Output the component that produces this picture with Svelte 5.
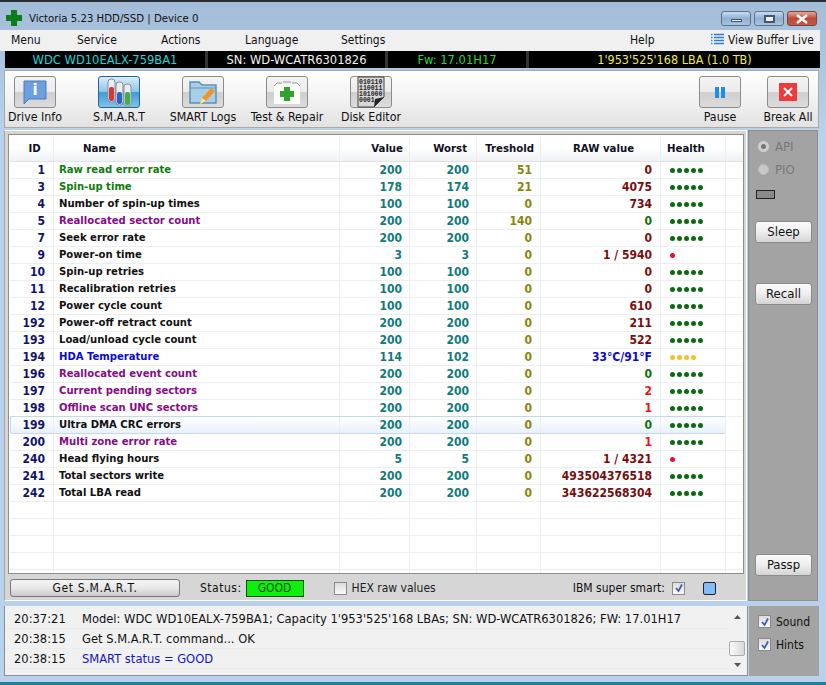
<script>
  const tools = [
    { label: "Drive Info", icon: "info" },
    { label: "S.M.A.R.T", icon: "smart", active: true },
    { label: "SMART Logs", icon: "logs" },
    { label: "Test & Repair", icon: "repair" },
    { label: "Disk Editor", icon: "disk" }
  ];

  // id, name, name colour, value, worst, treshold, raw, raw colour, health
  const rows = [
    [1, "Raw read error rate", "ok", 200, 200, 51, "0", "dark", 5],
    [3, "Spin-up time", "ok", 178, 174, 21, "4075", "dark", 5],
    [4, "Number of spin-up times", "", 100, 100, 0, "734", "dark", 5],
    [5, "Reallocated sector count", "crit", 200, 200, 140, "0", "fine", 5],
    [7, "Seek error rate", "", 200, 200, 0, "0", "dark", 5],
    [9, "Power-on time", "", 3, 3, 0, "1 / 5940", "dark", 1],
    [10, "Spin-up retries", "", 100, 100, 0, "0", "dark", 5],
    [11, "Recalibration retries", "", 100, 100, 0, "0", "dark", 5],
    [12, "Power cycle count", "", 100, 100, 0, "610", "dark", 5],
    [192, "Power-off retract count", "", 200, 200, 0, "211", "dark", 5],
    [193, "Load/unload cycle count", "", 200, 200, 0, "522", "dark", 5],
    [194, "HDA Temperature", "temp", 114, 102, 0, "33°C/91°F", "temp", 4],
    [196, "Reallocated event count", "crit", 200, 200, 0, "0", "fine", 5],
    [197, "Current pending sectors", "crit", 200, 200, 0, "2", "bad", 5],
    [198, "Offline scan UNC sectors", "crit", 200, 200, 0, "1", "bad", 5],
    [199, "Ultra DMA CRC errors", "", 200, 200, 0, "0", "fine", 5],
    [200, "Multi zone error rate", "crit", 200, 200, 0, "1", "bad", 5],
    [240, "Head flying hours", "", 5, 5, 0, "1 / 4321", "dark", 1],
    [241, "Total sectors write", "", 200, 200, 0, "493504376518", "dark", 5],
    [242, "Total LBA read", "", 200, 200, 0, "343622568304", "dark", 5]
  ];

  const log = [
    ["20:37:21", "Model: WDC WD10EALX-759BA1; Capacity 1'953'525'168 LBAs; SN: WD-WCATR6301826; FW: 17.01H17", ""],
    ["20:38:15", "Get S.M.A.R.T. command... OK", ""],
    ["20:38:15", "SMART status = GOOD", "blue"]
  ];

  const dotClass = (n) => (n === 1 ? "red" : n === 4 ? "amber" : "green");
</script>

{#snippet tick()}
  <i class="box on">
    <svg width="10" height="10" viewBox="0 0 10 10">
      <path d="M2 5l2.500 3L8 1.500" fill="none" stroke="#3d5fb0" stroke-width="1.800" />
    </svg>
  </i>
{/snippet}

<div class="window">
  <header class="title">
    <svg class="logo" width="16" height="16" viewBox="0 0 16 16">
      <path d="M5 0h6v5h5v6h-5v5H5v-5H0V5h5z" fill="#0c7d1a" />
    </svg>
    <span class="caption">Victoria 5.23 HDD/SSD | Device 0</span>
    <div class="controls">
      <span class="ctl"><i class="min"></i></span>
      <span class="ctl"><i class="max"></i></span>
      <span class="ctl close">
        <svg width="14" height="10" viewBox="0 0 14 10">
          <path d="M2 1l10 8M12 1L2 9" stroke="#fff" stroke-width="2.400" />
        </svg>
      </span>
    </div>
  </header>

  <nav class="menu">
    <span>Menu</span><span>Service</span><span>Actions</span><span>Language</span><span>Settings</span><span>Help</span>
    <span class="buffer">
      <svg width="13" height="13" viewBox="0 0 13 13">
        <path d="M0 1.500h1.500M3 1.500h10M0 4.500h1.500M3 4.500h10M0 7.500h1.500M3 7.500h10M0 10.500h1.500M3 10.500h10" stroke="#2f7fd6" stroke-width="1.300" />
      </svg>
      View Buffer Live
    </span>
  </nav>

  <div class="drive">
    <span class="cyan">WDC WD10EALX-759BA1</span>
    <span class="white">SN: WD-WCATR6301826</span>
    <span class="lime">Fw: 17.01H17</span>
    <span class="yellow">1'953'525'168 LBA (1.0 TB)</span>
  </div>

  <div class="toolbar">
    {#each tools as t}
      <div class="tool">
        <span class="tbtn" class:active={t.active}>
          {#if t.icon === "info"}
            <svg width="30" height="30" viewBox="0 0 30 30">
              <path d="M4 4h22v18H9l-5 5z" fill="#6d9fe0" stroke="#4a7cc0" />
              <text x="15" y="18" text-anchor="middle" class="i">i</text>
            </svg>
          {:else if t.icon === "smart"}
            <svg width="32" height="30" viewBox="0 0 32 30">
              <rect x="5" y="2" width="7" height="23" rx="3" fill="#e9eef2" stroke="#8a8f96" />
              <rect x="6" y="10" width="5" height="14" rx="2" fill="#d8373a" />
              <rect x="13" y="5" width="7" height="23" rx="3" fill="#e9eef2" stroke="#8a8f96" />
              <rect x="14" y="15" width="5" height="12" rx="2" fill="#2f63c8" />
              <rect x="21" y="7" width="7" height="22" rx="3" fill="#e9eef2" stroke="#8a8f96" />
              <rect x="22" y="15" width="5" height="13" rx="2" fill="#3fae4a" />
            </svg>
          {:else if t.icon === "logs"}
            <svg width="32" height="30" viewBox="0 0 32 30">
              <path d="M3 5h9l3 3h14v18H3z" fill="#a9cfe6" stroke="#5b93b5" stroke-width="1.500" />
              <path d="M3 11h26" stroke="#5b93b5" />
              <path d="M13 27l2-6 9-10 4 3-9 10z" fill="#f0952a" />
              <path d="M13 27l2-6 4 3z" fill="#f7e2b0" />
            </svg>
          {:else if t.icon === "repair"}
            <svg width="32" height="30" viewBox="0 0 32 30">
              <path d="M3 7h26v20H3z" fill="#fbfbf8" />
              <path d="M3 9l3-3h5M29 9l-3-3h-5M12 5h8" stroke="#9a9a9a" fill="none" />
              <path d="M13 10h6v4h4v6h-4v4h-6v-4H9v-6h4z" fill="#2ea42e" />
            </svg>
          {:else}
            <svg width="32" height="32" viewBox="0 0 32 32">
              <path d="M3 1h26v20l-10 10H3z" fill="#d7d7d7" stroke="#444" />
              <path d="M19 31l1-8 9-2z" fill="#222" />
              <text x="4" y="8" class="bits">010110</text>
              <text x="4" y="14" class="bits">110011</text>
              <text x="4" y="20" class="bits">101000</text>
              <text x="4" y="26" class="bits">0001</text>
            </svg>
          {/if}
        </span>
        <span class="tlabel">{t.label}</span>
      </div>
    {/each}
    <div class="tool pause">
      <span class="tbtn">
        <svg width="12" height="13" viewBox="0 0 12 13">
          <path d="M1 1h4v11H1zM7 1h4v11H7z" fill="#1f8fe6" />
        </svg>
      </span>
      <span class="tlabel">Pause</span>
    </div>
    <div class="tool break">
      <span class="tbtn">
        <svg width="18" height="18" viewBox="0 0 18 18">
          <rect width="18" height="18" fill="#ee3a3a" />
          <path d="M5 5l8 8M13 5l-8 8" stroke="#fff" stroke-width="2" />
        </svg>
      </span>
      <span class="tlabel">Break All</span>
    </div>
  </div>

  <div class="middle">
    <section class="main">
      <div class="table">
        <div class="row head">
          <span class="hid">ID</span>
          <span class="nm">Name</span>
          <span class="r">Value</span>
          <span class="r worst">Worst</span>
          <span class="r">Treshold</span>
          <span class="hraw">RAW value</span>
          <span class="hhealth">Health</span>
          <span></span>
        </div>
        {#each rows as [id, name, tone, value, worst, tresh, raw, rawTone, health]}
          <div class="row" class:sel={id === 199}>
            <span class="id">{id}</span>
            <span class="nm {tone}">{name}</span>
            <span class="num">{value}</span>
            <span class="num">{worst}</span>
            <span class="tr">{tresh}</span>
            <span class="raw {rawTone}">{raw}</span>
            <span class="health">
              {#each Array(health) as _}<i class={dotClass(health)}></i>{/each}
            </span>
            <span></span>
          </div>
        {/each}
        {#each Array(5) as _}
          <div class="row empty"><span></span><span></span><span></span><span></span><span></span><span></span><span></span><span></span></div>
        {/each}
      </div>
      <div class="status">
        <span class="getbtn">Get S.M.A.R.T.</span>
        <span class="st">Status:</span>
        <span class="goodbox">GOOD</span>
        <span class="hex"><i class="box"></i>HEX raw values</span>
        <span class="ibm">IBM super smart:{@render tick()}</span>
        <i class="swatch"></i>
      </div>
    </section>

    <aside class="side">
      <div class="radio on"><i></i>API</div>
      <div class="radio"><i></i>PIO</div>
      <i class="led"></i>
      <span class="sbtn sleep">Sleep</span>
      <span class="sbtn recall">Recall</span>
      <span class="sbtn passp">Passp</span>
    </aside>
  </div>

  <div class="bottom">
    <div class="log">
      <div class="lines">
        {#each log as [time, text, tone]}
          <div class="line"><span class="time">{time}</span><span class={tone}>{text}</span></div>
        {/each}
      </div>
      <div class="scroll">
        <svg width="7" height="4" viewBox="0 0 7 4"><path d="M3.500 0L7 4H0z" fill="#555" /></svg>
        <i class="thumb"></i>
        <svg width="7" height="4" viewBox="0 0 7 4"><path d="M3.500 4L7 0H0z" fill="#555" /></svg>
      </div>
    </div>
    <div class="opts">
      <span>{@render tick()}Sound</span>
      <span>{@render tick()}Hints</span>
    </div>
  </div>
  <div class="edge"></div>
</div>

<style>
  :global(body) {
    margin: 0;
  }
  .window {
    width: 826px;
    height: 685px;
    overflow: hidden;
    display: flex;
    flex-direction: column;
    border-top: 2px solid #2a2f36;
    box-sizing: border-box;
    background: linear-gradient(#a3bcd7, #b9d1ea 130px);
    font-family: "DejaVu Sans", Tahoma, sans-serif;
    font-stretch: condensed;
    font-size: 12px;
    color: #111;
  }
  i {
    font-style: normal;
  }
  .title {
    height: 28px;
    flex: none;
    display: flex;
    align-items: center;
    padding: 4px 9px 0 6px;
    box-sizing: border-box;
    gap: 7px;
  }
  .caption {
    font-size: 11.300px;
    padding-top: 1px;
  }
  .controls {
    margin-left: auto;
    display: flex;
    gap: 3px;
    align-self: flex-start;
    margin-top: 5px;
  }
  .ctl {
    width: 30px;
    height: 15px;
    box-sizing: border-box;
    border: 1px solid #5d7288;
    border-radius: 3px;
    background: linear-gradient(#c9dcef, #8fb0d2 50%, #a9c5e0);
    display: flex;
    align-items: center;
    justify-content: center;
  }
  .ctl.close {
    background: linear-gradient(#e2a99c, #c24a35 50%, #bb5a4c);
    border-color: #7d4238;
  }
  .min {
    width: 11px;
    height: 3px;
    margin-top: 4px;
    background: #eef3f8;
    border: 1px solid #44586c;
    box-sizing: border-box;
  }
  .max {
    width: 11px;
    height: 8px;
    background: #eef3f8;
    border: 2px solid #44586c;
    box-sizing: border-box;
  }
  .menu {
    height: 21px;
    flex: none;
    margin-right: 6px;
    background: #f0f0f0;
    display: grid;
    grid-template-columns: 66px 84px 84px 96px 289px 81px auto;
    align-items: center;
    padding: 0 0 2px 11px;
    box-sizing: border-box;
  }
  .buffer {
    display: flex;
    align-items: center;
    gap: 4px;
    font-size: 11.800px;
  }
  .drive {
    height: 17px;
    flex: none;
    margin: 0 6px 0 5px;
    background: #000;
    display: grid;
    grid-template-columns: 200px 177px 138px 1fr;
    column-gap: 3px;
    text-align: center;
    line-height: 17px;
    font-size: 12.800px;
  }
  .drive span {
    background: #000;
    box-shadow: 3px 0 0 #333;
  }
  .drive span:last-child {
    box-shadow: none;
    font-size: 12.500px;
  }
  .cyan { color: #22d3d3; }
  .white { color: #f2f2f2; }
  .lime { color: #22d83a; }
  .yellow { color: #f0e85a; }

  .toolbar {
    height: 58px;
    flex: none;
    margin: 2px 7px 0 4px;
    box-sizing: border-box;
    border: 1px solid #a9a9a9;
    background: linear-gradient(#fff, #f2f2f2 50%, #e2e2e2);
    display: flex;
    padding: 5px 4px 0 4px;
    gap: 32px;
  }
  .tool {
    width: 52px;
    display: flex;
    flex-direction: column;
    align-items: center;
    white-space: nowrap;
  }
  .tool.pause {
    margin-left: auto;
  }
  .tool.break {
    margin-left: -16px;
  }
  .tbtn {
    width: 42px;
    height: 32px;
    flex: none;
    box-sizing: border-box;
    border: 1px solid #8c8c8c;
    border-radius: 3px;
    background: linear-gradient(#f3f3f3, #ececec 48%, #cfcfcf 52%, #dcdcdc);
    display: flex;
    align-items: center;
    justify-content: center;
  }
  .tbtn.active {
    border-color: #2c628b;
    background: linear-gradient(#d8eefb, #8cc7ea 48%, #3f9bd2 52%, #7fc3ea);
  }
  .tlabel {
    margin-top: 2px;
    line-height: 15px;
    font-size: 12.300px;
  }
  .i {
    font: bold 15px "DejaVu Sans", sans-serif;
    fill: #fff;
  }
  .bits {
    font: bold 6.500px "Liberation Mono", monospace;
    fill: #222;
  }

  .middle {
    display: flex;
    height: 471px;
    flex: none;
    margin: 2px 8px 0 4px;
    gap: 1px;
  }
  .main {
    width: 743px;
    box-sizing: border-box;
    background: #d6d6d6;
    border: 1px solid #fff;
    border-left-color: #a5a5a5;
    display: flex;
    flex-direction: column;
    padding: 3px 2px 0 3px;
  }
  .side {
    flex: 1;
    background: #a3a3a3;
    border: 1px solid #8f8f8f;
    box-sizing: border-box;
    display: flex;
    flex-direction: column;
    align-items: flex-start;
    padding: 4px 0 0 6px;
  }
  .table {
    height: 440px;
    box-sizing: border-box;
    flex: none;
    background: #fff;
    border: 1px solid #8e8e8e;
    overflow: hidden;
    padding: 2px 0 0 1px;
  }
  .row {
    display: grid;
    grid-template-columns: 44px 286px 70px 67px 64px 120px 65px 18px;
    height: 17px;
    line-height: 16px;
    border-bottom: 1px solid #eceff2;
    box-sizing: border-box;
    font-weight: bold;
    font-size: 12px;
  }
  .row > span {
    border-right: 1px solid #eceff2;
    box-sizing: border-box;
    min-width: 0;
    white-space: nowrap;
  }
  .row.head {
    height: 25px;
    line-height: 24px;
    font-size: 11.300px;
    border-bottom: 1px solid #dfe2e6;
    background: linear-gradient(#fff 45%, #eff1f4);
    color: #10101e;
  }
  .row.sel {
    width: 716px;
    border: 1px solid #c5d8ef;
    border-radius: 2px;
    margin: -1px 0 0 0;
    height: 18px;
    background: linear-gradient(#fff, #e8f1fb);
    grid-template-columns: 43px 286px 70px 67px 64px 120px 65px;
  }
  .hid {
    padding-left: 6px;
    text-align: center;
  }
  .hraw {
    padding-left: 32px;
  }
  .hhealth {
    padding-left: 6px;
  }
  .r {
    text-align: right;
    padding-right: 6px;
  }
  .r.worst {
    padding-right: 9px;
  }
  .head .nm {
    padding-left: 29px;
    font-size: 11.300px;
  }
  .id {
    text-align: right;
    padding-right: 8px;
    color: #12126e;
  }
  .nm {
    padding-left: 5px;
    font-size: 11.200px;
  }
  .nm.ok { color: #0c7d0c; }
  .nm.crit { color: #860b86; }
  .nm.temp { color: #0a0ad6; }
  .num {
    text-align: right;
    padding-right: 7px;
    color: #117a7a;
  }
  .tr {
    text-align: right;
    padding-right: 8px;
    color: #86860c;
  }
  .raw {
    text-align: right;
    padding-right: 8px;
  }
  .raw.dark { color: #780d0d; }
  .raw.fine { color: #0c720c; }
  .raw.bad { color: #f01010; }
  .raw.temp { color: #0a0ad6; }
  .health {
    display: flex;
    align-items: center;
    gap: 2px;
    padding-left: 9px;
  }
  .health i {
    width: 5px;
    height: 5px;
    border-radius: 50%;
  }
  .green { background: #0b6a12; }
  .red { background: #ee1020; }
  .amber { background: #f5bf2e; }

  .status {
    flex: 1;
    display: flex;
    align-items: center;
    padding: 2px 0 0 2px;
    box-sizing: border-box;
  }
  .getbtn {
    width: 170px;
    height: 18px;
    line-height: 17px;
    text-align: center;
    box-sizing: border-box;
    border: 1px solid #777;
    border-radius: 3px;
    letter-spacing: 0.700px;
    background: linear-gradient(#f4f4f4, #e8e8e8 50%, #c9c9c9);
  }
  .st {
    margin-left: 20px;
    letter-spacing: 0.500px;
  }
  .goodbox {
    width: 58px;
    height: 17px;
    box-sizing: border-box;
    margin-left: 4px;
    background: #0cf00c;
    border: 1px solid #0b4d0b;
    text-align: center;
    line-height: 15px;
    color: #0b4a0b;
  }
  .hex {
    margin-left: 30px;
    display: flex;
    align-items: center;
    gap: 5px;
    color: #222;
  }
  .box {
    width: 13px;
    height: 13px;
    flex: none;
    box-sizing: border-box;
    border: 1px solid #8a8a8a;
    background: linear-gradient(#dcdcdc, #fafafa);
    display: inline-flex;
    align-items: center;
    justify-content: center;
  }
  .ibm {
    margin-left: auto;
    display: flex;
    align-items: center;
    gap: 7px;
  }
  .swatch {
    width: 13px;
    height: 13px;
    box-sizing: border-box;
    margin: 0 28px 0 18px;
    background: #84bcfa;
    border: 1px solid #222;
    border-radius: 2px;
  }

  .radio {
    display: flex;
    align-items: center;
    gap: 6px;
    height: 23px;
    color: #777;
    margin-left: 3px;
    font-size: 13px;
  }
  .radio i {
    width: 11px;
    height: 11px;
    box-sizing: border-box;
    border-radius: 50%;
    background: #c8c8c8;
    border: 1px solid #bdbdbd;
  }
  .radio.on i {
    border: 3px solid #cfcfcf;
    background: #777;
  }
  .led {
    width: 19px;
    height: 9px;
    box-sizing: border-box;
    background: #8a8a8a;
    border: 1px solid #222;
    margin: 9px 0 0 1px;
  }
  .sbtn {
    width: 57px;
    height: 22px;
    line-height: 20px;
    text-align: center;
    box-sizing: border-box;
    border: 1px solid #8b8b8b;
    border-radius: 3px;
    font-size: 13px;
    background: linear-gradient(#fbfbfb, #eee 50%, #d4d4d4);
  }
  .sleep { margin-top: 22px; }
  .recall { margin-top: 40px; }
  .passp { margin-top: auto; margin-bottom: 24px; }

  .bottom {
    display: flex;
    height: 70px;
    flex: none;
    margin: 5px 7px 0 4px;
  }
  .log {
    width: 744px;
    box-sizing: border-box;
    display: flex;
    background: #f1f1f1;
    border: 1px solid #8a9097;
    border-top: none;
    padding-right: 2px;
  }
  .lines {
    flex: 1;
    padding-top: 3px;
    font-size: 12.800px;
  }
  .line {
    height: 20px;
    line-height: 20px;
    display: flex;
    border-bottom: 1px solid #ececec;
    box-sizing: border-box;
    white-space: nowrap;
  }
  .time {
    width: 73px;
    padding-left: 9px;
    box-sizing: border-box;
    margin-right: 4px;
  }
  .blue { color: #1414c8; }
  .scroll {
    width: 16px;
    display: flex;
    flex-direction: column;
    align-items: center;
    padding: 9px 0 0;
    box-sizing: border-box;
  }
  .thumb {
    width: 16px;
    height: 15px;
    margin: 22px 0 7px;
    box-sizing: border-box;
    border: 1px solid #aaa;
    border-radius: 2px;
    background: linear-gradient(90deg, #fafafa, #d8d8d8);
  }
  .opts {
    width: 70px;
    margin-left: 1px;
    background: #a3a3a3;
    display: flex;
    flex-direction: column;
    gap: 8px;
    padding: 8px 0 0 9px;
    box-sizing: border-box;
  }
  .opts span {
    display: flex;
    align-items: center;
    gap: 5px;
    height: 15px;
  }
  .edge {
    margin-top: 6px;
    height: 3px;
    flex: none;
    background: #1f7f96;
  }
</style>
